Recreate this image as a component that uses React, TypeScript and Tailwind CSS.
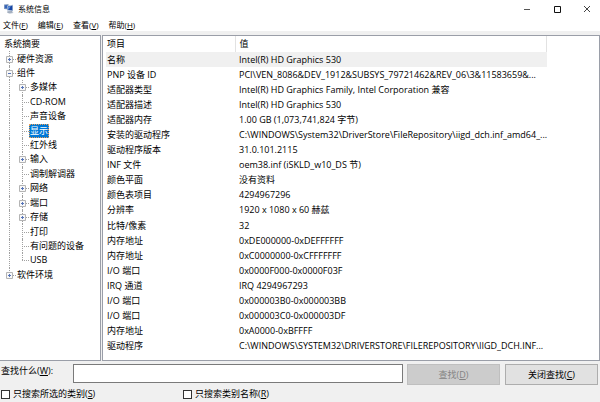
import { useState } from "react";
import clsx from "clsx";

interface TreeNode {
  label: string;
  level: number;
  toggle?: "+" | "-";
  last?: boolean;
}

const tree: TreeNode[] = [
  { label: "系统摘要", level: 0 },
  { label: "硬件资源", level: 1, toggle: "+" },
  { label: "组件", level: 1, toggle: "-" },
  { label: "多媒体", level: 2, toggle: "+" },
  { label: "CD-ROM", level: 2 },
  { label: "声音设备", level: 2 },
  { label: "显示", level: 2 },
  { label: "红外线", level: 2 },
  { label: "输入", level: 2, toggle: "+" },
  { label: "调制解调器", level: 2 },
  { label: "网络", level: 2, toggle: "+" },
  { label: "端口", level: 2, toggle: "+" },
  { label: "存储", level: 2, toggle: "+" },
  { label: "打印", level: 2 },
  { label: "有问题的设备", level: 2 },
  { label: "USB", level: 2, last: true },
  { label: "软件环境", level: 1, toggle: "+", last: true },
];

const rows: [string, string][] = [
  ["名称", "Intel(R) HD Graphics 530"],
  ["PNP 设备 ID", "PCI\\VEN_8086&DEV_1912&SUBSYS_79721462&REV_06\\3&11583659&..."],
  ["适配器类型", "Intel(R) HD Graphics Family, Intel Corporation 兼容"],
  ["适配器描述", "Intel(R) HD Graphics 530"],
  ["适配器内存", "1.00 GB (1,073,741,824 字节)"],
  ["安装的驱动程序", "C:\\WINDOWS\\System32\\DriverStore\\FileRepository\\iigd_dch.inf_amd64_..."],
  ["驱动程序版本", "31.0.101.2115"],
  ["INF 文件", "oem38.inf (iSKLD_w10_DS 节)"],
  ["颜色平面", "没有资料"],
  ["颜色表项目", "4294967296"],
  ["分辨率", "1920 x 1080 x 60 赫兹"],
  ["比特/像素", "32"],
  ["内存地址", "0xDE000000-0xDEFFFFFF"],
  ["内存地址", "0xC0000000-0xCFFFFFFF"],
  ["I/O 端口", "0x0000F000-0x0000F03F"],
  ["IRQ 通道", "IRQ 4294967293"],
  ["I/O 端口", "0x000003B0-0x000003BB"],
  ["I/O 端口", "0x000003C0-0x000003DF"],
  ["内存地址", "0xA0000-0xBFFFF"],
  ["驱动程序", "C:\\WINDOWS\\SYSTEM32\\DRIVERSTORE\\FILEREPOSITORY\\IIGD_DCH.INF..."],
];

const menus = [
  ["文件", "F"],
  ["编辑", "E"],
  ["查看", "V"],
  ["帮助", "H"],
];

const AccessKey = ({ text, letter }: { text: string; letter: string }) => (
  <>
    {text}(<u>{letter}</u>)
  </>
);

const AppIcon = () => (
  <svg viewBox="0 0 10 10" className="h-[10px] w-[10px]" aria-hidden="true">
    <path d="M0 .5 4.5 0v5.5L0 5Z" fill="#8a9fc0" />
    <path d="M.8 1.2 3.8 1v3.6l-3-.4Z" fill="#3463b8" />
    <path d="M3 1.8 9 .8v6.4L3 6.5Z" fill="#a9bbd5" />
    <path d="M3.8 2.5 8.3 1.8v4.4l-4.5-.5Z" fill="#1745a5" />
    <path d="m4 2.7 3-.5-2.6 3.3H4Z" fill="#5e91da" />
    <path d="m3 7.2 5-.1 1.5 1.8-3.8.8L3 8.7Z" fill="#bcc5d2" />
    <path d="m4 8.1 4-.2" stroke="#6d7c94" strokeWidth=".6" />
  </svg>
);

const TitleBar = () => (
  <header className="flex h-[18px] items-center justify-between pl-1 pr-[9px]">
    <div className="flex items-center gap-1">
      <AppIcon />
      <h1 className="text-[8px]">系统信息</h1>
    </div>
    <div className="flex gap-[22px]">
      <button aria-label="最小化">
        <svg viewBox="0 0 8 8" className="h-2 w-2">
          <path d="M1 4.5h6" stroke="#555" />
        </svg>
      </button>
      <button aria-label="最大化">
        <svg viewBox="0 0 8 8" className="h-2 w-2">
          <path d="M1.5 1.5h6v6h-6Z" fill="none" stroke="#111" />
        </svg>
      </button>
      <button aria-label="关闭">
        <svg viewBox="0 0 8 8" className="h-2 w-2">
          <path d="m1 1 6 6M7 1 1 7" stroke="#444" />
        </svg>
      </button>
    </div>
  </header>
);

const Gutter = ({ node }: { node: TreeNode }) => (
  <span className="relative w-[13px] self-stretch">
    <span
      className={clsx(
        "absolute left-[6px] top-0 border-l border-dotted border-[#a0a0a0]",
        node.last ? "bottom-1/2" : "bottom-0"
      )}
    />
    <span className="absolute left-[6px] right-0 top-1/2 border-t border-dotted border-[#a0a0a0]" />
    {node.toggle && (
      <button
        aria-label={node.toggle === "+" ? "展开" : "折叠"}
        className="absolute left-[3px] top-1/2 block -translate-y-[3px]"
      >
        <svg viewBox="0 0 7 7" className="block h-[7px] w-[7px]">
          <path d="M.5.5h6v6h-6Z" fill="#f8f8f8" stroke="#b4b4b4" />
          <path
            d={node.toggle === "+" ? "M2 3.5h3M3.5 2v3" : "M2 3.5h3"}
            stroke="#5674b8"
          />
        </svg>
      </button>
    )}
  </span>
);

const Tree = () => {
  const [selected, setSelected] = useState<string>("显示");

  return (
    <nav className="w-[101px] shrink-0 border border-l-0 border-[#9a9ea8] bg-white pt-px">
      <ul className="grid h-[245px] auto-rows-fr">
        {tree.map((node) => (
          <li key={node.label} className="flex items-center pl-[3px]">
            {node.level === 2 && (
              <span className="relative w-[13px] self-stretch">
                <span className="absolute bottom-0 left-[6px] top-0 border-l border-dotted border-[#a0a0a0]" />
              </span>
            )}
            {node.level > 0 && <Gutter node={node} />}
            <button
              onClick={() => setSelected(node.label)}
              className={clsx(
                "whitespace-nowrap border border-dotted leading-[12px]",
                selected === node.label
                  ? "border-[#e8a25c] bg-[#0078d7] text-white"
                  : "border-transparent"
              )}
            >
              {node.label}
            </button>
          </li>
        ))}
      </ul>
    </nav>
  );
};

const Details = () => (
  <section className="min-w-0 flex-1 overflow-hidden border border-[#9a9ea8] bg-white pb-[6px] pl-[3px]">
    <table className="h-[318px] w-[441px] table-fixed border-collapse text-left">
      <thead>
        <tr className="h-4">
          <th className="w-[129px] border-r border-[#e2e2e2] p-0 pl-px font-normal">
            项目
          </th>
          <th className="border-r border-[#e2e2e2] p-0 pl-1 font-normal">值</th>
        </tr>
      </thead>
      <tbody>
        {rows.map(([name, value], index) => (
          <tr key={index} className={clsx("h-[15px]", index === 0 && "bg-[#f0f0f0]")}>
            <td className="whitespace-nowrap p-0 pl-px">{name}</td>
            <td className="whitespace-nowrap p-0 pl-1">{value}</td>
          </tr>
        ))}
      </tbody>
    </table>
  </section>
);

const CheckOption = ({ text, letter }: { text: string; letter: string }) => (
  <label className="flex items-center gap-[3px]">
    <input
      type="checkbox"
      className="h-[9px] w-[9px] appearance-none border border-[#333] bg-white checked:bg-[#0078d7]"
    />
    <span>
      <AccessKey text={text} letter={letter} />
    </span>
  </label>
);

const FindBar = () => (
  <form className="pl-px pr-[2px] pt-[3px]" onSubmit={(e) => e.preventDefault()}>
    <div className="flex items-start">
      <label htmlFor="find" className="w-[72px] shrink-0">
        <AccessKey text="查找什么" letter="W" />:
      </label>
      <input
        id="find"
        type="text"
        className="h-[19px] min-w-0 flex-1 border border-[#7a7a7a] bg-white px-1 outline-none"
      />
      <button
        disabled
        className="ml-1 h-[21px] w-[93px] border border-[#bfbfbf] bg-[#cccccc] text-[#838383]"
      >
        <AccessKey text="查找" letter="D" />
      </button>
      <button
        type="button"
        className="ml-[5px] h-[21px] w-[93px] border border-[#adadad] bg-[#e1e1e1]"
      >
        <AccessKey text="关闭查找" letter="C" />
      </button>
    </div>
    <div className="flex pt-[2px]">
      <div className="w-[182px]">
        <CheckOption text="只搜索所选的类别" letter="S" />
      </div>
      <CheckOption text="只搜索类别名称" letter="R" />
    </div>
  </form>
);

const App = () => {
  return (
    <div className="min-h-screen bg-[#f0f0f0] font-['Open_Sans','Noto_Sans_CJK_SC',sans-serif] text-[9px] leading-[14px] text-black">
      <div className="bg-white">
        <TitleBar />
        <nav className="flex h-[13px] items-center gap-[10px] pl-[3px] text-[8px]">
          {menus.map(([text, letter]) => (
            <button key={letter}>
              <AccessKey text={text} letter={letter} />
            </button>
          ))}
        </nav>
      </div>
      <main className="flex gap-px pt-1">
        <Tree />
        <Details />
      </main>
      <FindBar />
    </div>
  );
};

export default App;
